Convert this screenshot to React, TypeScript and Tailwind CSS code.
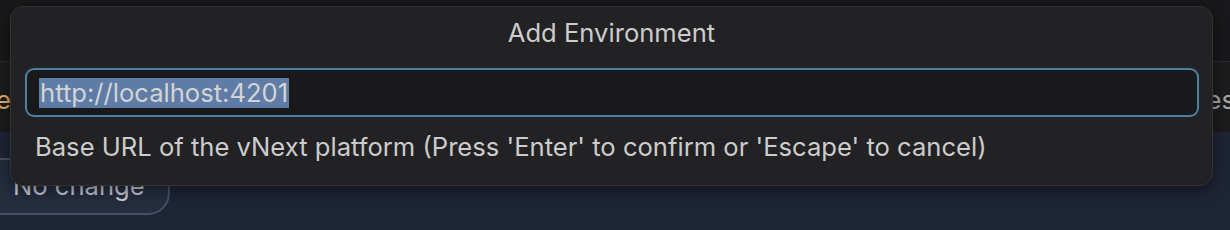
export default function App() {
  return (
    <div className="relative w-[1230px] h-[230px] overflow-hidden bg-[#1e2536] font-['Inter','Liberation_Sans',sans-serif]">
      {/* background page */}
      <div className="h-[62px] bg-[#19191b] border-b border-[#2c2c2e]" />
      <div className="h-[70px] bg-[#1c1c1e] flex items-center justify-between text-[25.6px] pt-[6px]">
        <span className="-ml-[4px] text-[#e2b36f]">e</span>
        <span className="-mr-[5px] text-[#a8a8a8]">es</span>
      </div>
      <div className="pt-[26px]">
        <div className="-ml-[20px] w-[190px] h-[57px] rounded-[22px] border-2 border-[#485066] bg-[#252d3f] flex items-center pl-[31px] text-[25.6px] text-[#c8ccd4]">
          No change
        </div>
      </div>

      {/* quick input dialog */}
      <div className="absolute left-[10px] top-[6px] w-[1203px] h-[180px] rounded-[13px] bg-[#222224] border border-[#333336] shadow-[0_4px_16px_rgba(0,0,0,0.5)] flex flex-col">
        <div className="h-[61px] pt-[11px] text-center text-[25.6px] leading-[30px] text-[#cccccc]">
          Add Environment
        </div>
        <div className="pl-[14px] pr-[13px]">
          <div className="h-[49px] rounded-[9px] border-2 border-[#4d7fa3] bg-[#19191b] flex items-center pl-[12px]">
            <span className="bg-[#5e7ca5] text-[#d4d4d4] text-[25.6px] leading-[30px] px-[1px]">http://localhost:4201</span>
          </div>
        </div>
        <div className="pl-[24px] pt-[15px] text-[25.6px] text-[#cccccc] leading-[30px]">
          Base URL of the vNext platform (Press 'Enter' to confirm or 'Escape' to cancel)
        </div>
      </div>
    </div>
  );
}
